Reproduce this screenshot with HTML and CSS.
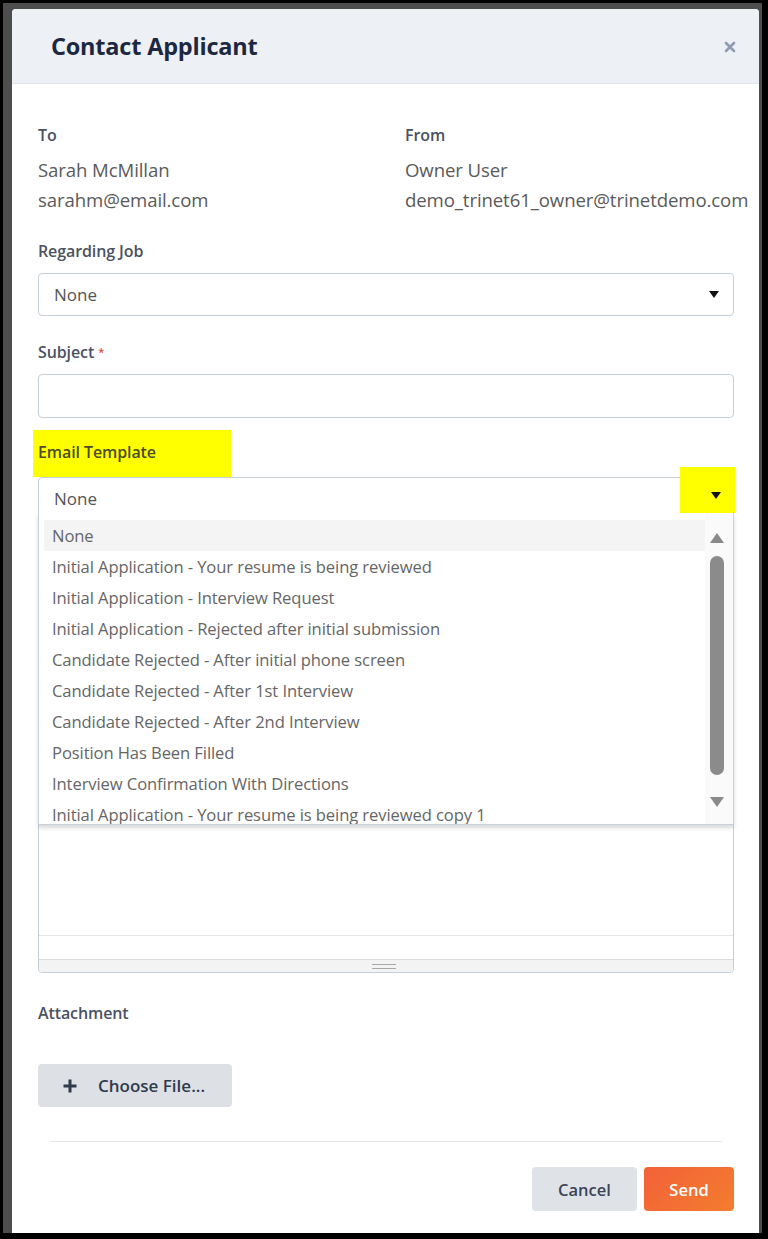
FILE: index.html
```html
<!DOCTYPE html>
<html lang="en">
<head>
<meta charset="utf-8">
<title>Contact Applicant</title>
<link rel="stylesheet" href="styles.css">
</head>
<body>
<div class="screen">
  <div class="backdrop">
    <div class="modal">
      <div class="modal-header">
        <h1 class="title">Contact Applicant</h1>
        <svg class="close" width="12" height="12" viewBox="0 0 12 12" aria-label="Close"><path d="M2 2L10 10M10 2L2 10" stroke="#8e9bb0" stroke-width="2.6" stroke-linecap="round"/></svg>
      </div>
      <div class="modal-body">
        <div class="parties">
          <div class="party">
            <div class="label">To</div>
            <div class="value">Sarah McMillan</div>
            <div class="value">sarahm@email.com</div>
          </div>
          <div class="party">
            <div class="label">From</div>
            <div class="value">Owner User</div>
            <div class="value">demo_trinet61_owner@trinetdemo.com</div>
          </div>
        </div>

        <div class="field">
          <div class="label">Regarding Job</div>
          <div class="select"><span>None</span><span class="caret"></span></div>
        </div>

        <div class="field">
          <div class="label">Subject <span class="req">*</span></div>
          <div class="input"></div>
        </div>

        <div class="field field-template">
          <div class="label label-hl">Email Template</div>
          <div class="dropdown">
            <div class="select open"><span>None</span><span class="caret-hl"><span class="caret"></span></span></div>
            <div class="menu">
              <ul class="options">
                <li class="active">None</li>
                <li>Initial Application - Your resume is being reviewed</li>
                <li>Initial Application - Interview Request</li>
                <li>Initial Application - Rejected after initial submission</li>
                <li>Candidate Rejected - After initial phone screen</li>
                <li>Candidate Rejected - After 1st Interview</li>
                <li>Candidate Rejected - After 2nd Interview</li>
                <li>Position Has Been Filled</li>
                <li>Interview Confirmation With Directions</li>
                <li>Initial Application - Your resume is being reviewed copy 1</li>
              </ul>
              <div class="scrollbar">
                <span class="sb-up"></span>
                <span class="sb-thumb"></span>
                <span class="sb-down"></span>
              </div>
            </div>
          </div>
        </div>

        <div class="editor">
          <div class="editor-area"></div>
          <div class="editor-row"></div>
          <div class="editor-status"><span class="grip"></span></div>
        </div>

        <div class="field field-attach">
          <div class="label">Attachment</div>
          <div class="file-btn">
            <svg class="plus" width="16" height="16" viewBox="0 0 16 16"><path d="M8 1.5V14.5M1.5 8H14.5" stroke="#2f3a4d" stroke-width="3"/></svg>
            <span>Choose File...</span>
          </div>
        </div>

        <div class="divider"></div>
        <div class="actions">
          <button class="btn btn-cancel">Cancel</button>
          <button class="btn btn-send">Send</button>
        </div>
      </div>
    </div>
  </div>
</div>
</body>
</html>
```
FILE: styles.css
```css
* { box-sizing: border-box; }
html, body { margin: 0; padding: 0; }
body { background: #000; font-family: "Open Sans", Lato, "Liberation Sans", sans-serif; }

.screen { width: 768px; height: 1239px; padding: 3px 6px 6px 3px; background: #000; }
.backdrop { height: 100%; background: #4d4d4d; padding: 6px 3px 0 9px; }
.modal { background: #fff; border-radius: 4px 4px 0 0; height: 1224px; overflow: hidden; }

.modal-header {
  height: 75px; background: #edf1f5; border-bottom: 1px solid #dfe4ea;
  display: flex; align-items: center; justify-content: space-between;
  padding: 0 23px 0 39px;
}
.title { margin: 0; font-size: 23.5px; font-weight: 700; color: #1d2840; letter-spacing: -0.2px; }
.close { display: block; margin-top: 2px; }

.modal-body { padding: 41px 25px 0 26px; }

.label { font-size: 16px; line-height: 20px; font-weight: 600; color: #4b5263; letter-spacing: -0.1px; }
.req { color: #e0474c; font-size: 11px; vertical-align: top; }

.parties { display: grid; grid-template-columns: minmax(0, 1fr) minmax(0, 1fr); column-gap: 38px; }
.party { min-width: 0; }
.party .label { margin-bottom: 10px; }
.value { font-size: 18.6px; line-height: 30px; color: #5a5a5a; white-space: nowrap; letter-spacing: -0.1px; }

.field { margin-top: 26px; }
.field > .label { margin-bottom: 12px; }

.select {
  height: 43px; border: 1px solid #c6ced8; border-radius: 4px;
  display: flex; align-items: center; justify-content: space-between;
  padding: 0 14px 0 15px; font-size: 17px; color: #555;
}
.caret { width: 0; height: 0; border-left: 5.5px solid transparent; border-right: 5.5px solid transparent; border-top: 7px solid #111; display: block; }
.input { height: 44px; border: 1px solid #c6ced8; border-radius: 4px; }

.field-template { margin-top: 12px; }
.field-template > .label-hl {
  width: 198px; margin: 0 0 0 -5px; padding: 12px 5px 15px;
  background: #ffff00; color: #4b4d2a;
}
.dropdown { position: relative; }
.caret-hl {
  position: absolute; top: -10px; right: -1px; width: 55px; height: 46px;
  background: #ffff00; display: flex; align-items: center; justify-content: flex-end;
  padding: 10px 14px 0 0;
}

.menu {
  position: absolute; top: 36px; left: 0; right: 0; height: 312px;
  background: #fff; border: 1px solid #c9d0d9; border-top: none;
  box-shadow: 0 3px 4px rgba(0,0,0,0.15);
  display: flex; z-index: 2;
}
.options { list-style: none; margin: 0; padding: 7px 0 0 5px; flex: 1; overflow: hidden; }
.options li { height: 31px; line-height: 31px; padding-left: 8px; font-size: 16.6px; color: #666; white-space: nowrap; letter-spacing: -0.1px; }
.options li.active { background: #f4f4f4; }
.scrollbar {
  width: 28px; background: #fafafa; display: flex; flex-direction: column; align-items: center;
  padding: 20px 4px 0 0;
}
.sb-up { width: 0; height: 0; border-left: 7px solid transparent; border-right: 7px solid transparent; border-bottom: 10px solid #8a8a8a; }
.sb-thumb { width: 14px; height: 219px; margin-top: 13px; border-radius: 7px; background: #8b8b8b; }
.sb-down { width: 0; height: 0; border-left: 7px solid transparent; border-right: 7px solid transparent; border-top: 10px solid #8a8a8a; margin-top: 22px; }

.editor {
  margin-top: 58px;
  height: 395px; border: 1px solid #c6ced8; border-radius: 4px;
  display: flex; flex-direction: column; overflow: hidden;
}
.editor-area { flex: 1; }
.editor-row { height: 24px; border-top: 1px solid #e5e5e5; }
.editor-status { height: 13px; background: #f3f3f3; border-top: 1px solid #dcdcdc; display: flex; justify-content: center; align-items: center; }
.grip { width: 24px; height: 5px; border-top: 1px solid #a8a8a8; border-bottom: 1px solid #a8a8a8; display: block; margin-left: -4px; }

.field-attach { margin-top: 30px; }
.field-attach > .label { margin-bottom: 41px; }
.file-btn {
  width: 194px; height: 43px; background: #dde1e6; border-radius: 4px;
  display: flex; align-items: center; gap: 20px; padding-left: 24px;
  font-size: 17px; font-weight: 600; color: #2f3a4d;
}
.plus { display: block; }

.divider { height: 1px; background: #e6e6e6; margin: 34px 12px 0; }
.actions { display: flex; justify-content: flex-end; gap: 7px; margin-top: 25px; }
.btn {
  height: 44px; border: none; border-radius: 4px; font-family: inherit;
  font-size: 16.5px; font-weight: 600; padding: 0; cursor: pointer;
}
.btn-cancel { width: 105px; background: #dfe3e8; color: #3a4456; }
.btn-send { width: 90px; background: linear-gradient(135deg, #f26138, #f47d2e); color: #fff; }
```
